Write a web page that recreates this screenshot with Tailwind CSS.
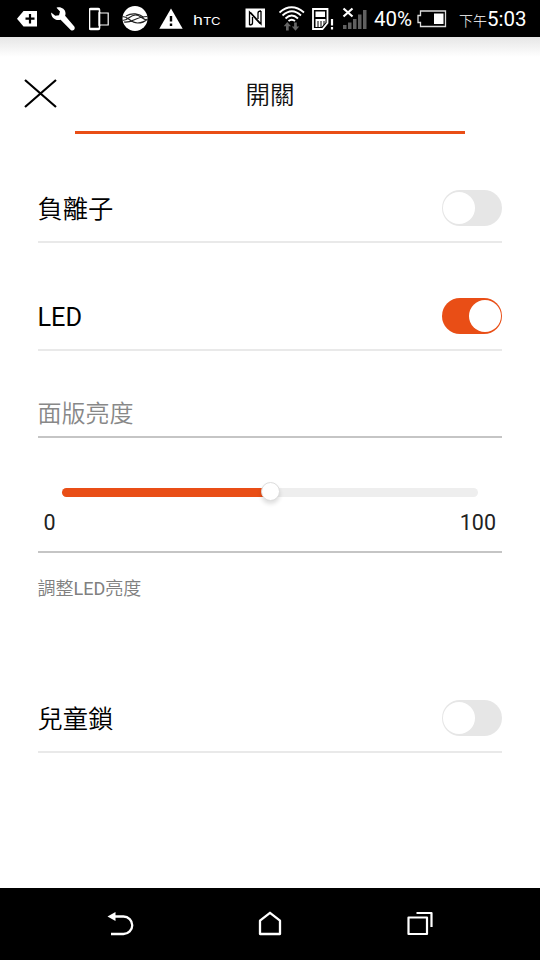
<!DOCTYPE html>
<html lang="zh-Hant">
<head>
<meta charset="utf-8">
<title>開關</title>
<script src="https://cdn.jsdelivr.net/npm/@tailwindcss/browser@4"></script>
</head>
<body class="w-[540px] h-[960px] overflow-hidden flex flex-col bg-white text-black font-[Roboto,'Noto_Sans_CJK_TC',sans-serif]">
<header class="h-[37px] shrink-0 bg-black text-white flex items-center pl-[17px] whitespace-nowrap">
  <svg class="w-5 h-[37px] shrink-0" viewBox="17 0 20 37"><path d="M17 18.700 23.500 11H37v15.500H23.500Z" fill="#fff"/><path d="M25.500 18.700h9M30 14v9.500" stroke="#000" stroke-width="2.200"/></svg>
  <svg class="ml-[14px] w-6 h-[37px] shrink-0" viewBox="51 0 24 37"><path d="M56.500 7.800C60 6.200 65.300 8.700 65.500 13c.1 1.200-.1 2-.4 2.800l9.200 10.800c1.500 2.300-1.100 5.100-3.600 3.300L60.600 19.700c-4.800 1.500-9.500-1.800-9.500-7.200l4.200 3.300 3.700-.5 1-3.700Z" fill="#fff"/></svg>
  <svg class="ml-[14px] w-[21px] h-[37px] shrink-0" viewBox="89 0 21 37" fill="none" stroke="#fff"><path d="M99.500 13V9.700q0-1.200-1.200-1.200h-7.600q-1.200 0-1.200 1.200v18.600q0 1.200 1.200 1.200h7.600q1.200 0 1.200-1.200V25M90 9.500h9.500M90 28.500h9.500" stroke-width="1.600"/><path d="M99 13h9.200v12H99Z" stroke-width="1.200"/><path d="M99.500 12v14" stroke-width="1.600"/></svg>
  <svg class="ml-3 w-[26px] h-[37px] shrink-0" viewBox="122 0 26 37"><circle cx="135" cy="18.500" r="12.500" fill="#fff"/><path d="M122.500 16.500c6 0 8 6.500 15 6.500 4 0 7-1 10-4M122.500 20.500c6 0 7-5.500 13-5.500 5 0 7 5 12 5M124 22c8 1.500 11-5.500 23.500-5.500M126 16c6-3.500 13-2.500 18 1.500" fill="none" stroke="#222" stroke-width="1.200"/></svg>
  <svg class="ml-[11px] w-6 h-[37px] shrink-0" viewBox="159 0 24 37"><path d="m171 8.500 11.700 20.300h-23.400Z" fill="#fff"/><path d="M171 16v5.500M171 23.500V26" stroke="#000" stroke-width="2.400"/></svg>
  <div class="ml-[10px] w-[28px] h-[18px] shrink-0"><div class="origin-left scale-x-[1.250] w-6 font-[Inter,sans-serif] text-[13.500px] leading-[20px]">h<span class="uppercase text-[10.500px]">tc</span></div></div>
  <svg class="ml-6 w-5 h-[37px] shrink-0" viewBox="245 0 20 37"><path d="M245.500 8.500h19.500v19h-19.500Z" fill="#fff"/><path d="M249.500 25V12l10.500 11.500M261 11v13L250.500 12.500M249.500 25c2 0 3-.5 3-2v-6M261 11c-2 0-3 .5-3 2v6" fill="none" stroke="#000" stroke-width="1.300"/></svg>
  <svg class="ml-[14px] w-[26px] h-[37px] shrink-0" viewBox="279 0 26 37"><path d="M279.500 12.500q12-10.500 24.500 0M282.500 15.500q9.500-8.500 18.500 0M285.500 18.500q6.200-6 12.500 0M288.500 21q3.200-2.600 6.500 0" fill="none" stroke="#fff" stroke-width="1.800"/><path d="m287.300 22 3.700 4.200h-2.300v4.300H286v-4.300h-2.300ZM295.500 30.800l-3.700-4.200h2.300v-4h2.700v4h2.400Z" fill="#666"/></svg>
  <svg class="ml-[7px] w-[22px] h-[37px] shrink-0" viewBox="312 0 22 37"><path d="M313 9h14.500v14l-5 6H313Z" fill="none" stroke="#fff" stroke-width="1.800"/><path d="M315.500 11.500h9.500v5.500h-9.500ZM315.500 19h10v3.500l-4 4.500h-6Z" fill="#fff"/><path d="M318 21v7M321 21v7M324 21v4" stroke="#000" stroke-width="1"/><path d="M332 19v6.500M332 27v2.500" stroke="#fff" stroke-width="2.200"/></svg>
  <svg class="ml-2 w-[25px] h-[37px] shrink-0" viewBox="342 0 25 37"><path d="M343 25h3.500v4H343ZM348 22.500h3.500V29H348ZM353 19h3.500v10H353ZM358 14.500h3.500V29H358ZM363 10h3.500v19H363Z" fill="#606060"/><path d="m343.500 8.500 9 8M352.500 8.500l-9 8" stroke="#fff" stroke-width="2.200"/></svg>
  <span class="ml-[7px] w-[39px] shrink-0 text-[20.500px] leading-6 pt-px">40%</span>
  <svg class="ml-1 w-[30px] h-[37px] shrink-0" viewBox="417 0 30 37"><path d="M420.500 11h25v15.500h-25v-4H418v-7h2.500Z" fill="none" stroke="#ddd" stroke-width="1.300"/><path d="M434 13.500h9.500v10.500H434Z" fill="#fff"/></svg>
  <div class="ml-3 pt-[2px] flex items-baseline leading-6"><span class="text-[14px] font-light">下午</span><span class="text-[20.500px]">5:03</span></div>
</header>

<main class="flex-1 flex flex-col bg-linear-to-b from-[#e6e6e6] to-white to-[20px]">
  <div class="h-[98px] mx-[24px] pt-[1px] shrink-0 flex flex-col">
    <div class="h-[93px] pt-[40px] grid grid-cols-[34px_1fr_34px]">
      <svg class="w-[34px] h-[32px]" viewBox="0 0 34 32"><path d="m1 2 31 27M32 2 1 29" stroke="#000" stroke-width="2.200"/></svg>
      <h1 class="pt-[2px] text-center text-[24.500px] leading-8 font-[350] text-[#111]">開關</h1>
    </div>
    <div class="h-[3px] mx-[51px] shrink-0 bg-[#e94e16]"></div>
  </div>

  <div class="ml-[37.500px] mr-[38px] flex flex-col">
    <div class="mt-[47px] h-[61px] flex justify-between border-b-2 border-[#e9e9e9] pt-[8px]">
      <span class="pt-[2px] text-[25.300px] leading-9 font-[350]">負離子</span>
      <span class="w-[60px] h-9 rounded-full bg-[#e6e6e6] flex items-center pl-[1px]"><span class="size-8 rounded-full bg-white"></span></span>
    </div>
    <div class="mt-[47px] h-[61px] flex justify-between border-b-2 border-[#e9e9e9] pt-[8px]">
      <span class="pt-[2px] text-[25.300px] leading-9">LED</span>
      <span class="w-[60px] h-9 rounded-full bg-[#e94e16] flex items-center justify-end pr-[1px]"><span class="size-8 rounded-full bg-white"></span></span>
    </div>
    <h2 class="mt-[43px] h-[44px] pt-[2px] border-b-2 border-[#c5c5c5] text-[24px] leading-9 font-[350] text-[#888]">面版亮度</h2>
    <div class="h-[115px] border-b-2 border-[#c5c5c5] px-[6px] pt-[50px]">
      <div class="mx-[18px] h-[9px] rounded-full bg-[#eee] flex items-center">
        <div class="w-1/2 h-[9px] rounded-l-full bg-[#e94e16]"></div>
        <div class="-ml-[9px] -mt-[3px] size-[19px] rounded-full bg-white border border-[#ddd] shadow-[0_3px_4px_#0002]"></div>
      </div>
      <div class="mt-[12px] flex justify-between text-[21.500px] leading-7 text-[#222]"><span>0</span><span>100</span></div>
    </div>
    <p class="mt-[22px] h-[28px] text-[18px] leading-7 font-[350] text-[#808080]">調整<span class="font-normal">LED</span>亮度</p>
    <div class="mt-[89px] h-[61px] flex justify-between border-b-2 border-[#e9e9e9] pt-[8px]">
      <span class="pt-[2px] text-[25.300px] leading-9 font-[350]">兒童鎖</span>
      <span class="w-[60px] h-9 rounded-full bg-[#e6e6e6] flex items-center pl-[1px]"><span class="size-8 rounded-full bg-white"></span></span>
    </div>
  </div>
</main>

<nav class="h-[72px] shrink-0 bg-black grid grid-cols-[45px_150px_150px_150px_45px] items-center justify-items-center">
  <svg class="col-start-2 w-8 h-8" viewBox="0 0 32 32"><path d="M8 8.500h11.500a8.700 8.700 0 0 1 0 17.500H7" fill="none" stroke="#fff" stroke-width="2.300"/><path d="M3.500 8.500 11.500 4v9Z" fill="#fff"/></svg>
  <svg class="w-8 h-8" viewBox="0 0 32 32"><path d="M6 12.700 16 4.800l10 7.900V26H6Z" fill="none" stroke="#fff" stroke-width="2.300" stroke-linejoin="round"/></svg>
  <svg class="w-8 h-8" viewBox="0 0 32 32"><path d="M4.500 9.500h18.500V26H4.500ZM12.500 5H27.500v14" fill="none" stroke="#fff" stroke-width="2.200" stroke-linejoin="round"/></svg>
</nav>
</body>
</html>
